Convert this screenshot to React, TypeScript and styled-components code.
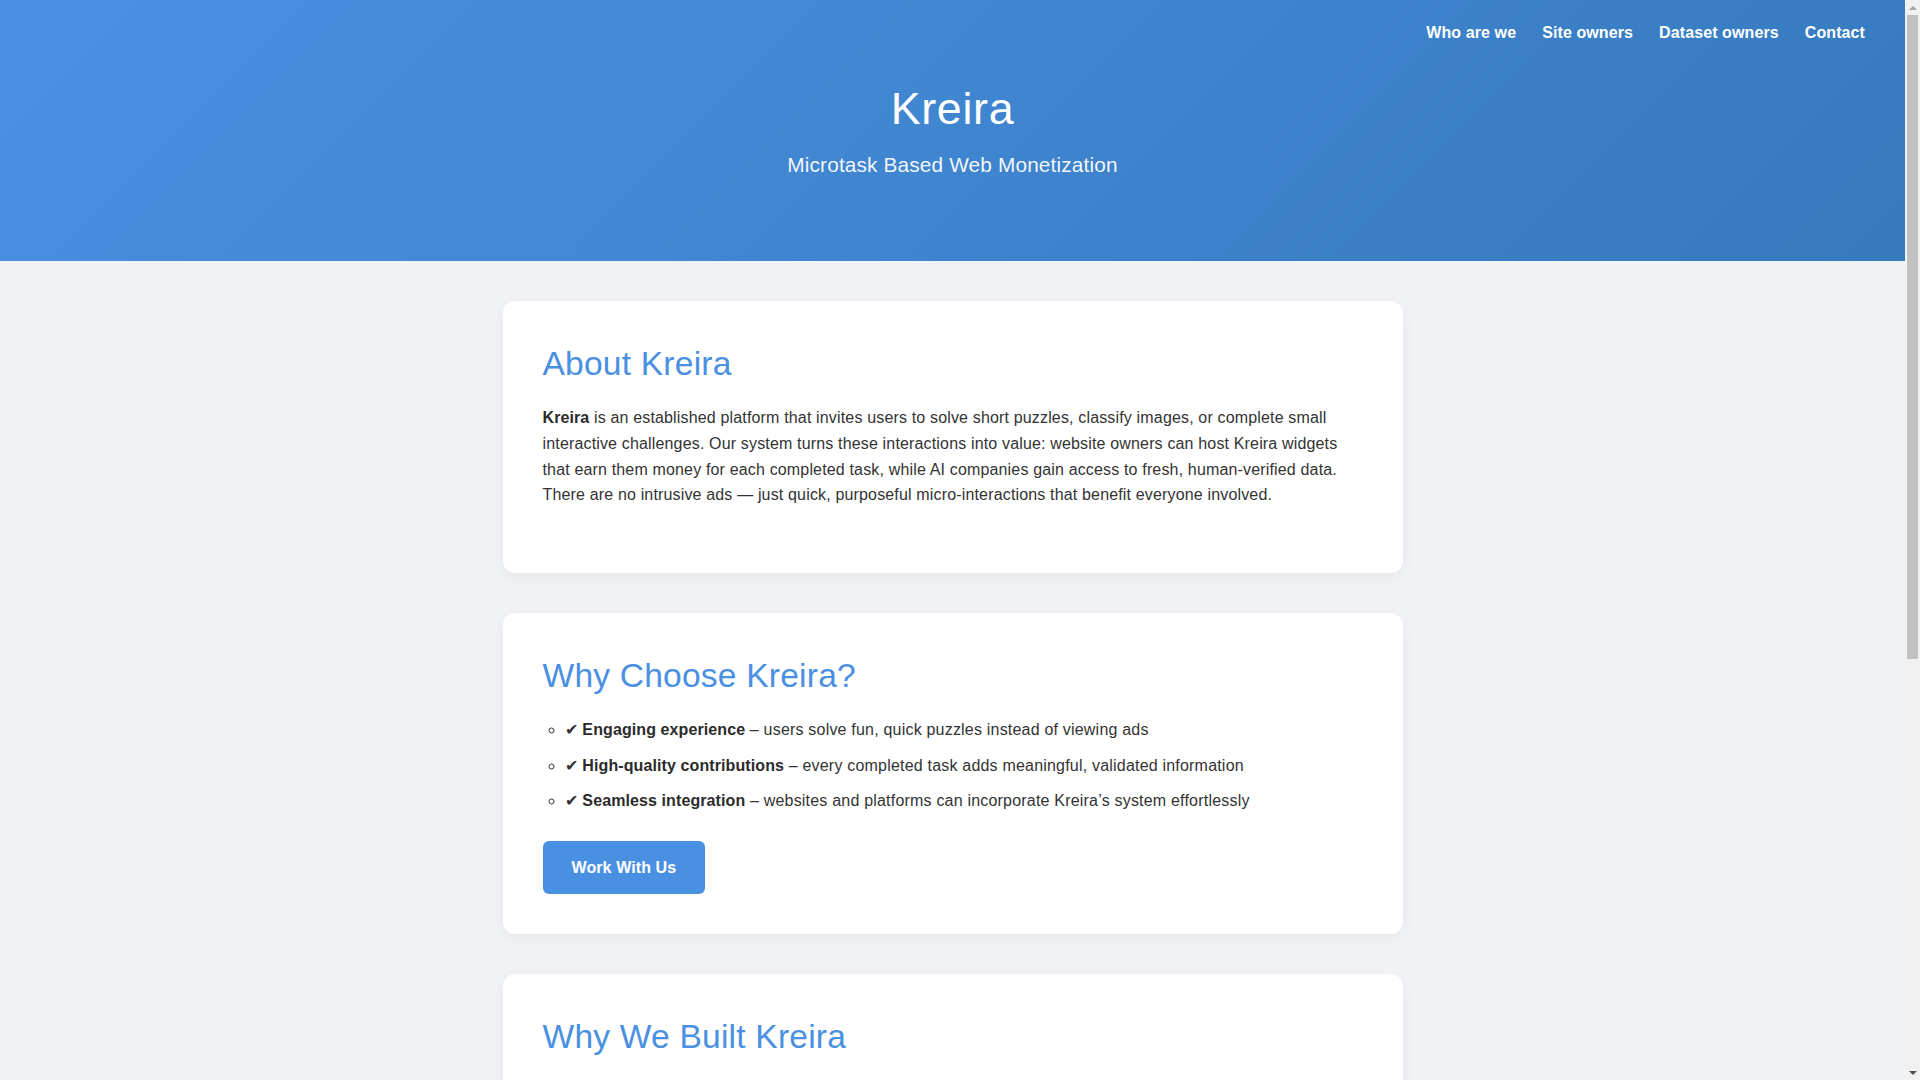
import React from 'react';
import styled, { createGlobalStyle } from 'styled-components';

const GlobalStyle = createGlobalStyle`
  body {
    margin: 0;
    background: #f0f2f5;
    font-family: "Liberation Sans", Arial, Helvetica, sans-serif;
    font-size: 16px;
    line-height: 1.6;
    color: #333;
  }
`;

const Shell = styled.div`
  display: flex;
  flex-direction: row;
  align-items: flex-start;
`;

const Page = styled.div`
  flex: 1;
  min-width: 0;
`;

/* window scrollbar as it appears in the capture */
const Rail = styled.div`
  position: sticky;
  top: 0;
  display: flex;
  flex-direction: column;
  width: 15px;
  height: 100vh;
  background: #f1f1f1;
`;

const RailButton = styled.div<{ $down?: boolean }>`
  display: flex;
  align-items: center;
  justify-content: center;
  height: 15px;

  &::before {
    content: '';
    width: 0;
    height: 0;
    border-left: 4px solid transparent;
    border-right: 4px solid transparent;
    ${({ $down }) =>
      $down
        ? 'border-top: 4px solid #505050;'
        : 'border-bottom: 4px solid #a3a3a3;'}
  }
`;

const RailTrack = styled.div`
  flex: 1;
  padding: 0 2px;
`;

const RailThumb = styled.div`
  height: 644px;
  background: #c1c1c1;
`;

const Header = styled.header`
  display: flex;
  flex-direction: column;
  align-items: stretch;
  height: 261px;
  box-sizing: border-box;
  padding: 19.5px 40px 0;
  background: linear-gradient(135deg, #4a90e2 0%, #357abd 100%);
  color: #fff;
  text-align: center;
`;

const Nav = styled.nav`
  display: flex;
  flex-direction: row;
  justify-content: flex-end;
  gap: 26px;
`;

const NavLink = styled.a`
  color: #fff;
  font-weight: 700;
  font-size: 16px;
  letter-spacing: 0.1px;
  text-decoration: none;
  cursor: pointer;
`;

const Title = styled.h1`
  margin: 36.5px 0 0;
  font-size: 44.8px;
  line-height: 1.2;
  font-weight: 400;
  letter-spacing: 0.7px;
`;

const Subtitle = styled.p`
  margin: 13px 0 0;
  font-size: 20.8px;
  letter-spacing: 0.15px;
  color: rgba(255, 255, 255, 0.95);
`;

const Main = styled.main`
  display: flex;
  flex-direction: column;
  align-items: center;
  gap: 40px;
  padding: 40px 20px;
`;

const Card = styled.section`
  width: 100%;
  max-width: 900px;
  box-sizing: border-box;
  padding: 40px;
  background: #fff;
  border-radius: 12px;
  box-shadow: 0 4px 14px rgba(0, 0, 0, 0.05);
`;

const CardTitle = styled.h2`
  margin: 0 0 19px;
  font-size: 33.6px;
  line-height: 1.35;
  font-weight: 400;
  letter-spacing: 0.2px;
  color: #4a90e2;
`;

const Text = styled.p`
  margin: 0 0 25px;
  letter-spacing: 0.16px;
`;

const Strong = styled.strong`
  color: #2b2b2b;
  letter-spacing: 0.1px;
`;

const List = styled.ul`
  margin: 0 0 27px;
  padding-left: 22px;
  list-style: circle;
`;

const Item = styled.li`
  margin-bottom: 10px;
  letter-spacing: 0.2px;

  &:last-child {
    margin-bottom: 0;
  }
`;

const Button = styled.button`
  padding: 14px 29px;
  border: none;
  border-radius: 6px;
  background: #4a90e2;
  color: #fff;
  font-family: inherit;
  font-size: 16px;
  font-weight: 700;
  line-height: 1.6;
  letter-spacing: 0.1px;
  cursor: pointer;
`;

const Footer = styled.footer`
  padding: 24px 20px;
  text-align: center;
  font-size: 14px;
  color: #777;
`;

const features = [
  {
    title: 'Engaging experience',
    text: 'users solve fun, quick puzzles instead of viewing ads',
  },
  {
    title: 'High-quality contributions',
    text: 'every completed task adds meaningful, validated information',
  },
  {
    title: 'Seamless integration',
    text: 'websites and platforms can incorporate Kreira\u2019s system effortlessly',
  },
];

const App = () => (
  <Shell>
    <GlobalStyle />
    <Page>
      <Header>
        <Nav>
          <NavLink href="#about">Who are we</NavLink>
          <NavLink href="#site-owners">Site owners</NavLink>
          <NavLink href="#dataset-owners">Dataset owners</NavLink>
          <NavLink href="#contact">Contact</NavLink>
        </Nav>
        <Title>Kreira</Title>
        <Subtitle>Microtask Based Web Monetization</Subtitle>
      </Header>
      <Main>
        <Card id="about">
          <CardTitle>About Kreira</CardTitle>
          <Text>
            <Strong>Kreira</Strong> is an established platform that invites
            users to solve short puzzles, classify images, or complete small
            interactive challenges. Our system turns these interactions into
            value: website owners can host Kreira widgets that earn them money
            for each completed task, while AI companies gain access to fresh,
            human-verified data. There are no intrusive ads — just quick,
            purposeful micro-interactions that benefit everyone involved.
          </Text>
        </Card>
        <Card id="site-owners">
          <CardTitle>Why Choose Kreira?</CardTitle>
          <List>
            {features.map((f) => (
              <Item key={f.title}>
                ✔ <Strong>{f.title}</Strong> – {f.text}
              </Item>
            ))}
          </List>
          <Button>Work With Us</Button>
        </Card>
        <Card id="dataset-owners">
          <CardTitle>Why We Built Kreira</CardTitle>
          <Text>
            The web runs on attention, and for too long that attention has been
            sold through banners, pop-ups and trackers. We believe visitors can
            support the sites they love in a better way: by spending a few
            seconds on a task that actually produces something useful, instead
            of staring at an advertisement they never asked for.
          </Text>
          <Text>
            At the same time, teams building AI systems need reliable,
            human-made data. Kreira connects these two needs, so publishers earn
            fairly and dataset owners receive carefully validated results.
          </Text>
        </Card>
        <Card id="contact">
          <CardTitle>Get In Touch</CardTitle>
          <Text>
            Whether you run a website or need labelled data, we would be glad
            to hear from you and help you get started with Kreira.
          </Text>
          <Button>Contact Us</Button>
        </Card>
      </Main>
      <Footer>© 2025 Kreira. All rights reserved.</Footer>
    </Page>
    <Rail aria-hidden>
      <RailButton />
      <RailTrack>
        <RailThumb />
      </RailTrack>
      <RailButton $down />
    </Rail>
  </Shell>
);

export default App;
